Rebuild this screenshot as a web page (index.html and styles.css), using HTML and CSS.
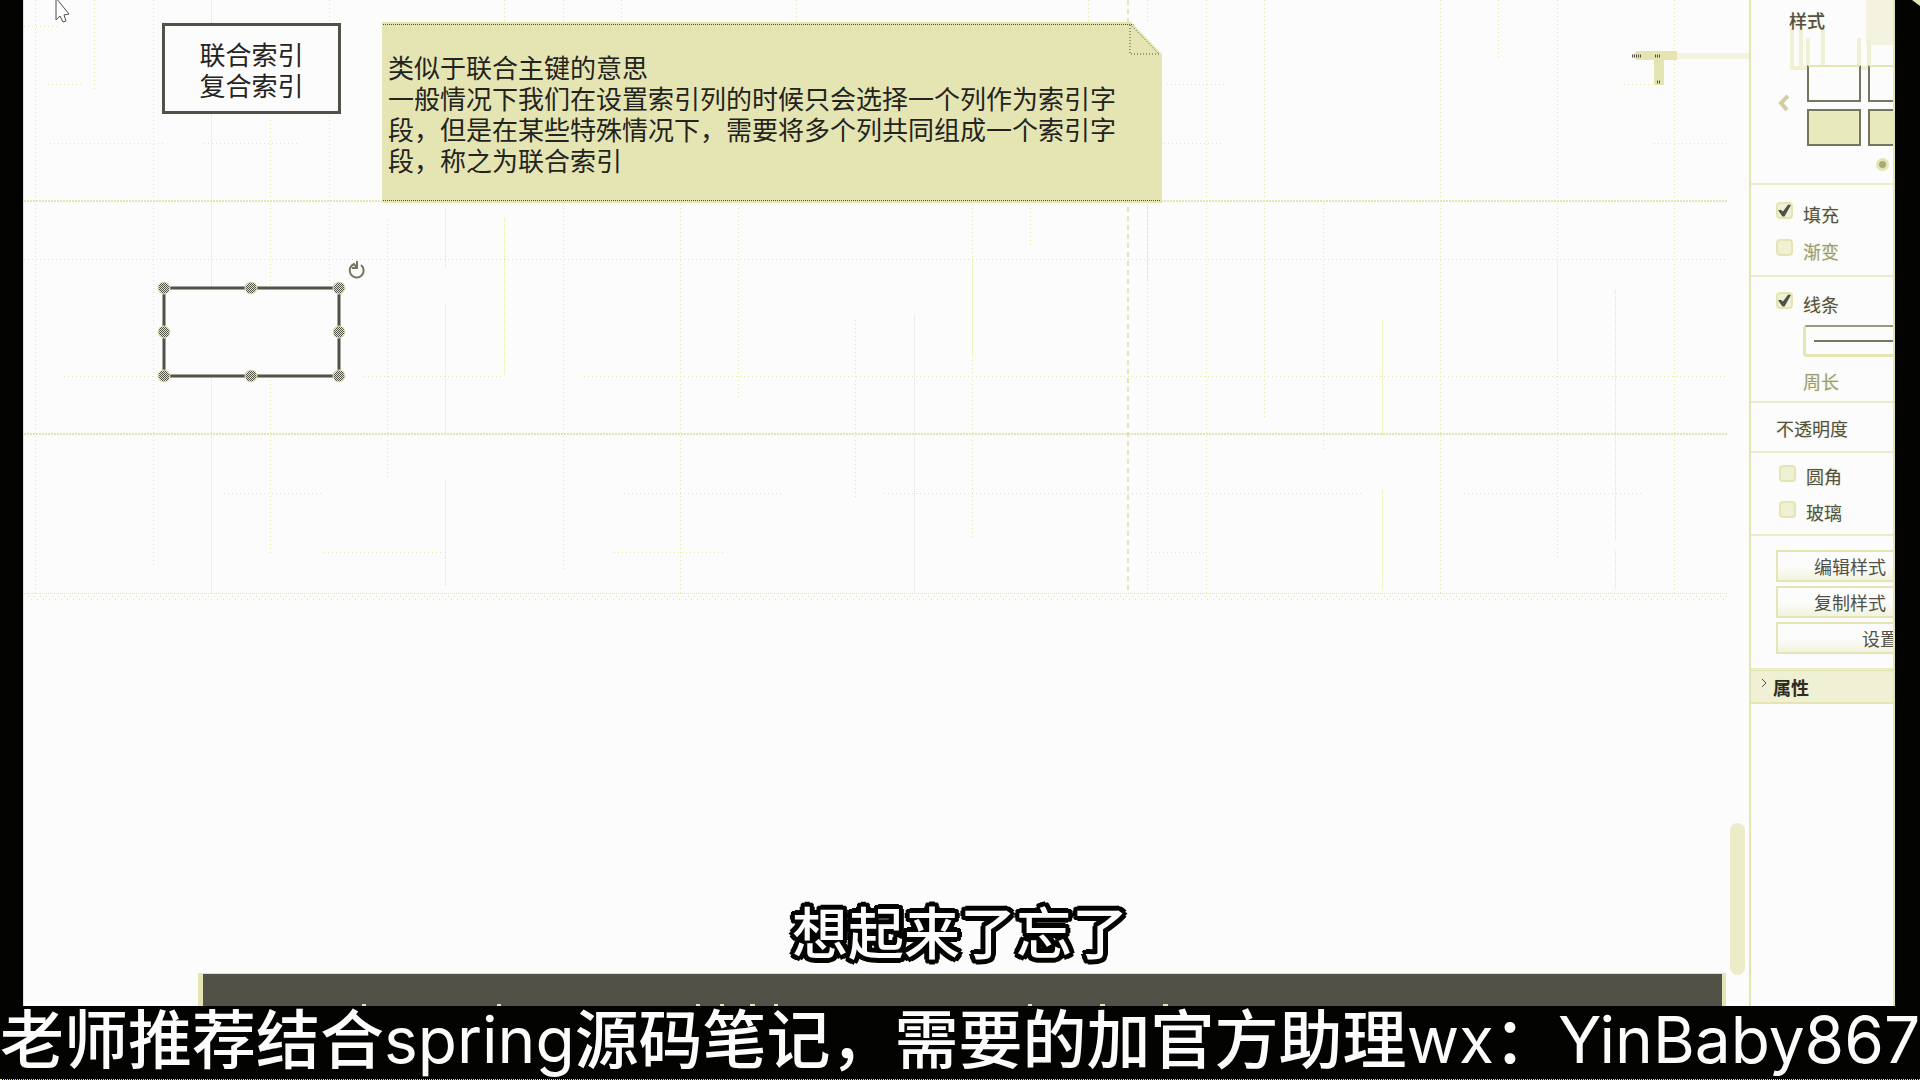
FILE: index.html
```html
<!DOCTYPE html>
<html lang="zh-CN">
<head>
<meta charset="utf-8">
<title>联合索引</title>
<link rel="stylesheet" href="styles.css">
</head>
<body>
<div class="frame">
  <main class="canvas">
    <svg class="grid" width="1727" height="640" aria-hidden="true">
      <g class="faint">
        <path d="M11 0V593M70 0V90M129 0V565M246 120V555M305 0V345M363 220V480M480 0V23M539 0V570M597 0V23M656 200V593M714 200V400M772 0V23M831 320V500M948 200V540M1006 200V245M1064 0V40M1123 0V593M1182 0V593M1240 0V420M1299 200V450M1416 0V593M1474 0V60M1533 0V560M1650 0V593"/>
        <path d="M0 26H36M24 84H60M1143 84H1200M1600 84H1640M26 143H140M180 143H275M1120 143H1200M1630 143H1704M0 259H1704M40 376H130M340 376H480M560 376H1704M200 493H300M600 493H760M860 493H1340M1440 493H1620M300 552H420M1123 552H1180M590 552H700"/>
      </g>
      <g class="dense">
        <path d="M187 0V593M421 208V268M421 304V434M421 480V586M480 218V376M890 315V593M948 260V355M1123 205V280M1358 320V435M1358 490V590M1533 260V360M1591 290V540M1591 550V590"/>
        <path d="M0 593H1704"/>
      </g>
      <g class="major"><path d="M0 201H1704M0 434H1704"/></g>
      <path class="fade" d="M4 596H1704M7 599H1704"/>
      <path class="guide" d="M1104 0V593"/>
    </svg>

    <svg class="cursor" width="18" height="26" viewBox="0 0 18 26" aria-hidden="true"><path d="M2 -2V20L6 16L9 22L12 21L10 15L15 14Z"/></svg>

    <div class="node node-title">联合索引<br>复合索引</div>

    <div class="note">
      <p>类似于联合主键的意思<br>一般情况下我们在设置索引列的时候只会选择一个列作为索引字<br>段，但是在某些特殊情况下，需要将多个列共同组成一个索引字<br>段，称之为联合索引</p>
      <svg class="fold" width="34" height="34" viewBox="0 0 34 34" aria-hidden="true"><path class="cut" d="M3 0H34V32Z"/><path class="crease" d="M2 3V32H31L3 3"/></svg>
    </div>

    <svg class="selection" width="216" height="132" viewBox="0 0 216 132" aria-hidden="true">
      <defs><pattern id="dots" width="2" height="2" patternUnits="userSpaceOnUse"><rect width="2" height="2" fill="#e5e5b3"/><rect width="1" height="1" fill="#515147"/><rect x="1" y="1" width="1" height="1" fill="#515147"/></pattern></defs>
      <rect class="shape" x="14" y="34" width="175" height="88"/>
      <g class="handles"><circle cx="14" cy="34" r="6"/><circle cx="101" cy="34" r="6"/><circle cx="189" cy="34" r="6"/><circle cx="14" cy="78" r="6"/><circle cx="189" cy="78" r="6"/><circle cx="14" cy="122" r="6"/><circle cx="101" cy="122" r="6"/><circle cx="189" cy="122" r="6"/></g>
      <path class="rotate" d="M211 11A7 7 0 1 1 204 10L207 14M207 7V14L202 14"/>
    </svg>

    <svg class="ghost" width="120" height="50" viewBox="0 0 120 50" aria-hidden="true">
      <path class="trail" d="M44 16H120"/><path class="arm" d="M2 16L8 11H48V20H8Z"/><path class="arm" d="M25 20H35V45H25Z"/><path class="tip" d="M3 16H12M26 16H32M28 42H32"/>
    </svg>

    <div class="scrollbar"></div>
    <div class="dock">
      <svg width="1521" height="5" aria-hidden="true"><path d="M159 4h4M294 4h4M493 4h4M517 4h4M547 4h5M571 4h4M825 4h4M897 4h5M960 4h5"/></svg>
    </div>
    <p class="subtitle">想起来了忘了</p>
  </main>

  <aside class="panel">
    <section class="styles">
      <svg class="streaks" width="145" height="184" viewBox="0 0 145 184" aria-hidden="true">
        <path class="tab" d="M115 0H145V45H115Z"/>
        <path class="streak" d="M41 28V70M50 28V68M72 28V68M57 38V70M108 38V70M118 40V70M40 68H145"/>
      </svg>
      <h2>样式</h2>
      <div class="picker">
        <button class="prev" aria-label="上一页"><svg width="12" height="18" viewBox="0 0 12 18"><path d="M11 2L4 9L10 16"/></svg></button>
        <div class="swatches">
          <button class="swatch plain" aria-label="白色"></button><button class="swatch plain" aria-label="白色二"></button>
          <button class="swatch" aria-label="黄色"></button><button class="swatch" aria-label="黄色二"></button>
        </div>
      </div>
      <span class="page-dot"></span>
    </section>
    <section class="fill">
      <label><input type="checkbox" checked><span>填充</span></label>
      <label class="muted"><input type="checkbox"><span>渐变</span></label>
    </section>
    <section class="line">
      <label><input type="checkbox" checked><span>线条</span></label>
      <button class="stroke" aria-label="线条样式"><i></i></button>
      <p class="muted">周长</p>
    </section>
    <section class="opacity">不透明度</section>
    <section class="effects">
      <label><input type="checkbox"><span>圆角</span></label>
      <label><input type="checkbox"><span>玻璃</span></label>
    </section>
    <section class="actions">
      <button>编辑样式</button>
      <button>复制样式</button>
      <button class="wide">设置</button>
    </section>
    <h3 class="props"><svg width="6" height="10" viewBox="0 0 6 10" aria-hidden="true"><path d="M1 1L5 5L1 9"/></svg>属性</h3>
  </aside>
</div>
<footer class="banner">老师推荐结合<span>spring</span>源码笔记，需要的加官方助理<span>wx</span>：<span>YinBaby867</span></footer>
</body>
</html>
```
FILE: styles.css
```css
:root {
  --paper: #fcfcfc;
  --tint: #e5e5b3;
  --ink: #515147;
  --black: #030301;
}

* { box-sizing: border-box; }

body {
  margin: 0;
  height: 100vh;
  display: flex;
  flex-direction: column;
  background: var(--black);
  color: var(--ink);
  font: 18px/24px "Noto Sans CJK SC", sans-serif;
  overflow: hidden;
}
body::after {
  content: "";
  position: absolute;
  right: 0;
  top: 0;
  width: 8px;
  height: 6px;
  background: var(--tint);
  clip-path: polygon(0 0, 100% 0, 100% 100%);
}

p, h2, h3 { margin: 0; font-weight: 400; }

button {
  padding: 0;
  font: inherit;
  color: inherit;
  background: none;
  border: 0;
}

.frame {
  flex: 1;
  min-height: 0;
  display: flex;
  margin: 0 25px 0 23px;
  background: var(--paper);
  border-left: 1px solid var(--tint);
  border-right: 2px solid var(--tint);
  overflow: hidden;
}

/* Drawing canvas */
.canvas {
  flex: 1;
  min-width: 0;
  position: relative;
  overflow: hidden;
}

.grid { position: absolute; left: 0; top: 0; }
.grid path { fill: none; stroke: var(--tint); shape-rendering: crispEdges; }
.faint { stroke-dasharray: 1 3; }
.dense { stroke-dasharray: 1 1; }
.major path { stroke-width: 2; stroke-dasharray: 2 1; }
.grid .fade { stroke-dasharray: 1 5; }
.grid .guide { stroke-width: 2; stroke-dasharray: 5 4; }

.cursor { position: absolute; left: 30px; top: 0; }
.cursor path { fill: var(--paper); stroke: var(--ink); }

.node {
  position: absolute;
  color: #232320;
  background: var(--paper);
  border: 3px solid var(--ink);
  font-size: 26px;
  line-height: 31px;
  text-align: center;
}
.node-title {
  left: 138px;
  top: 23px;
  width: 179px;
  height: 91px;
  padding: 12px 0;
}

.note {
  position: absolute;
  left: 358px;
  top: 22px;
  width: 780px;
  height: 181px;
  padding: 29px 6px;
  background: var(--tint);
  color: #232320;
  font-size: 26px;
  line-height: 31px;
  white-space: nowrap;
}
.note::after {
  content: "";
  position: absolute;
  inset: 2px 2px 2px 1px;
  border: 1px dotted var(--ink);
  border-width: 1px 0;
}
.fold { position: absolute; right: 0; top: 0; z-index: 1; }
.cut { fill: var(--paper); }
.crease { fill: none; stroke: var(--ink); stroke-dasharray: 1 2; }

.selection { position: absolute; left: 126px; top: 254px; }
.shape { fill: var(--paper); stroke: var(--ink); stroke-width: 3; }
.handles circle { fill: url(#dots); stroke: var(--tint); stroke-width: 1; }
.rotate { fill: none; stroke: #76765e; stroke-width: 2; }

.ghost { position: absolute; right: 0; top: 40px; }
.trail { stroke: #f3f3df; stroke-width: 6; }
.arm { fill: var(--tint); }
.tip { stroke: var(--ink); stroke-width: 3; stroke-dasharray: 1 1; }

.scrollbar {
  position: absolute;
  right: 4px;
  top: 823px;
  width: 15px;
  height: 152px;
  border-radius: 8px;
  background: #ececc8;
}

.dock {
  position: absolute;
  left: 174px;
  right: 23px;
  bottom: 0;
  height: 33px;
  display: flex;
  align-items: flex-end;
  background: var(--ink);
  border: solid var(--tint);
  border-width: 1px 4px 0 5px;
  overflow: hidden;
}
.dock path { stroke: var(--tint); stroke-width: 2; }

.subtitle {
  position: absolute;
  left: 768px;
  top: 894px;
  color: var(--paper);
  font-size: 56px;
  font-weight: 500;
  line-height: 72px;
  white-space: nowrap;
  text-shadow:
    5px 0 var(--black), 4px 3px var(--black), 3px 4px var(--black), 0 5px var(--black),
    -3px 4px var(--black), -4px 3px var(--black), -5px 0 var(--black), -4px -3px var(--black),
    -3px -4px var(--black), 0 -5px var(--black), 3px -4px var(--black), 4px -3px var(--black),
    2px 2px var(--black), -2px 2px var(--black), -2px -2px var(--black), 2px -2px var(--black);
}

/* Format panel */
.panel {
  flex: 0 0 144px;
  border-left: 2px solid var(--tint);
  overflow: hidden;
  white-space: nowrap;
  text-shadow: 0 0 2px var(--tint);
}
.panel section { border-bottom: 2px solid #ececc8; }

.styles { position: relative; height: 185px; padding: 8px 0 0 26px; }
.streaks { position: absolute; left: 0; top: 0; }
.tab { fill: #f3f3df; }
.streak { fill: none; stroke: #f0f0d4; stroke-width: 4; }
.styles h2 { position: relative; padding-left: 12px; font-size: 18px; line-height: 24px; font-weight: 500; }
.picker { position: relative; display: flex; gap: 18px; align-items: center; padding-top: 33px; }
.prev { width: 12px; height: 18px; display: flex; margin-bottom: 6px; }
.prev path { fill: none; stroke: #cfcf9f; stroke-width: 4; }
.swatches { display: grid; grid-template-columns: 54px 54px; gap: 7px; }
.swatch { height: 37px; background: #e9e9be; border: 2px solid #76765e; }
.plain { background: var(--paper); border-top-color: var(--tint); }
.page-dot {
  position: absolute;
  left: 125px;
  top: 158px;
  width: 13px;
  height: 13px;
  border-radius: 50%;
  background: #a8a883;
  border: 3px solid var(--tint);
}

label { display: flex; align-items: center; gap: 10px; height: 37px; }
input {
  appearance: none;
  width: 17px;
  height: 17px;
  margin: 0;
  margin-bottom: 6px;
  border-radius: 4px;
  background: #f0f0d4;
  border: 2px solid var(--tint);
}
input:checked::before {
  content: "";
  display: block;
  width: 13px;
  height: 13px;
  background: var(--ink);
  clip-path: polygon(0 48%, 22% 44%, 38% 58%, 78% 4%, 100% 8%, 50% 96%, 34% 96%);
}
.muted { color: #9b9b7b; }

.fill { height: 92px; padding: 10px 0 0 25px; }
.line { height: 126px; padding: 8px 0 0 25px; }
.stroke {
  display: flex;
  align-items: center;
  width: 120px;
  height: 32px;
  margin: 3px 0 0 27px;
  padding-left: 8px;
  border: 3px solid var(--tint);
  border-top: 2px solid #9b9b7b;
  border-radius: 4px;
}
.stroke i { width: 100px; border-top: 2px solid #76765e; }
.line p { padding: 12px 0 0 27px; }
.opacity { height: 50px; padding: 13px 0 0 25px; }
.effects { height: 83px; padding: 5px 0 0 28px; }
.effects label { height: 36px; }
.actions { height: 134px; padding: 14px 0 0 25px; display: grid; grid-auto-rows: 32px; gap: 4px; align-content: start; }
.actions button {
  width: 148px;
  background: linear-gradient(var(--paper) 50%, #f3f3df);
  border: 2px solid var(--tint);
}
.actions .wide { width: 208px; }
.props {
  display: flex;
  align-items: center;
  gap: 6px;
  height: 34px;
  padding-left: 10px;
  background: #f0f0d4;
  border: solid var(--tint);
  border-width: 1px 0 2px;
  color: #2c2c26;
  font-size: 18px;
  font-weight: 700;
}
.props svg { margin-bottom: 8px; }
.props path { fill: none; stroke: var(--ink); }

/* Promotional line along the bottom */
.banner {
  flex: 0 0 74px;
  border-bottom: 1px dotted var(--tint);
  color: var(--paper);
  font: 500 64px/68px Inter, "Noto Sans CJK SC", sans-serif;
  white-space: nowrap;
}
.banner span { font-weight: 400; }
```
